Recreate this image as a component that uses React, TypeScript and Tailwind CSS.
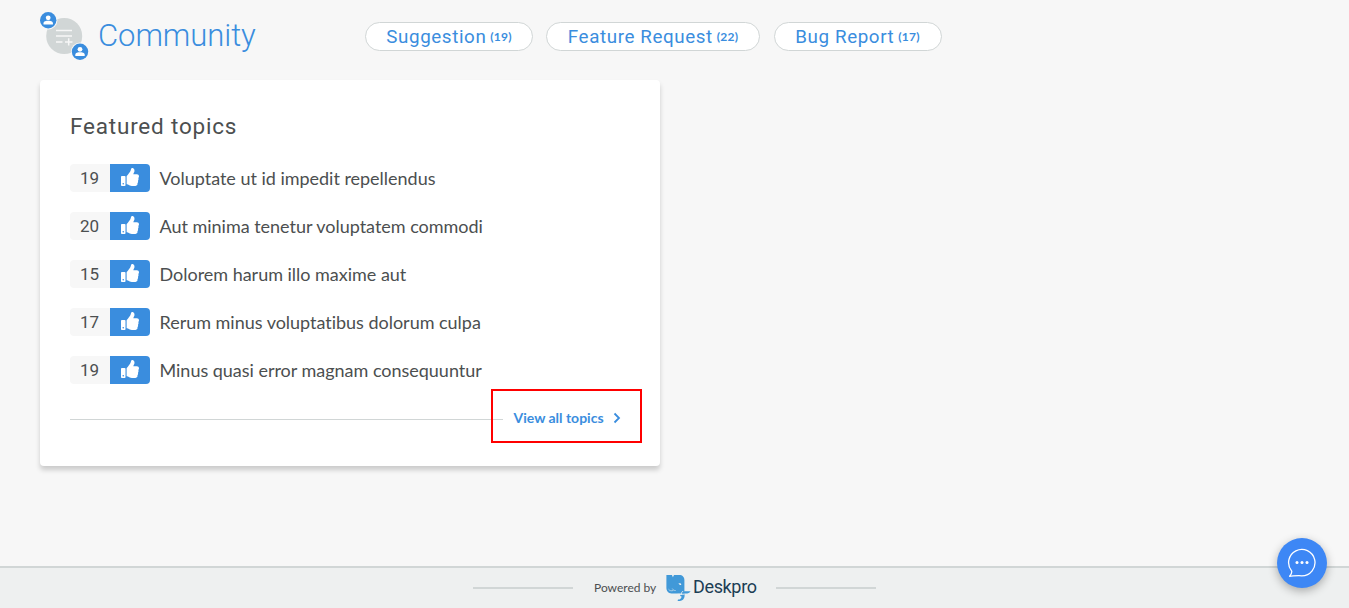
import { FaThumbsUp } from 'react-icons/fa';

const categories = [
  { name: 'Suggestion', count: 19, width: 'w-[168px]' },
  { name: 'Feature Request', count: 22, width: 'w-[214px]' },
  { name: 'Bug Report', count: 17, width: 'w-[168px]' },
];

const topics = [
  { votes: 19, title: 'Voluptate ut id impedit repellendus' },
  { votes: 20, title: 'Aut minima tenetur voluptatem commodi' },
  { votes: 15, title: 'Dolorem harum illo maxime aut' },
  { votes: 17, title: 'Rerum minus voluptatibus dolorum culpa' },
  { votes: 19, title: 'Minus quasi error magnam consequuntur' },
];

function Person({ x, y }: { x: number; y: number }) {
  return (
    <g transform={`translate(${x} ${y})`}>
      <circle r="9.2" fill="#f7f7f7" />
      <circle r="8.2" fill="#3a8dde" />
      <circle cy="-2.4" r="2.4" fill="#fff" />
      <path d="M-4.700 4.200V3C-4.700 1.200-2 .6 0 .6S4.700 1.200 4.700 3v1.200Z" fill="#fff" />
    </g>
  );
}

function CommunityIcon() {
  return (
    <svg width="50" height="50" viewBox="0 0 50 50" className="shrink-0">
      <circle cx="24.200" cy="25" r="18" fill="#d1d6d6" />
      <path d="M16 19.600h16M16 25h16M16 30.900h6.500M25 30.900h7.500M28.700 27.300v7.200" stroke="#f7f7f7" strokeWidth="1.500" fill="none" />
      <Person x={8.2} y={9.2} />
      <Person x={40} y={40.7} />
    </svg>
  );
}

function DeskproMark() {
  return (
    <svg width="25" height="28" viewBox="0 0 25 28" className="shrink-0">
      <path
        d="M.4 1h5.500l1 2.200L8 1h5.200C16.500 1 18.400 3.100 18.400 6v11.600h-2.300l-.6 1.800H5.500C2.300 19.300.4 17 .4 14Z"
        fill="#4199d8"
      />
      <path d="M2.500 15.200c1.300 1.700 3 1.900 4.600 1.300M6.300 14.600c.7 1.500 1.800 2 3.400 1.900" stroke="#eef0f0" strokeWidth=".6" fill="none" />
      <path d="M12.400 9.300h2.200l.8 1.700h-1.600Z" fill="#eef0f0" />
      <path d="M15.600 17.300h9c-.8 1.900-2.800 2.400-6 2.300v1.800c0 3.700-2.400 5.800-7 5.600l.4-1.400c2.200-.1 3.400-1.300 3.600-3.200l-1.500-.3Z" fill="#4199d8" />
      <path d="M11.500 20.300h4l.2-1.800 1-1.300M15 20.400l3.700-.3" stroke="#eef0f0" strokeWidth=".9" fill="none" />
    </svg>
  );
}

export default function App() {
  return (
    <div className="relative flex h-[608px] w-full flex-col overflow-hidden bg-[#f7f7f7] font-['Lato',sans-serif] text-[#4c4f50]">
      <header className="flex h-20 items-start pl-10">
        <div className="flex w-[325px] items-start pt-[11px]">
          <CommunityIcon />
          <h1 className="ml-[8px] mt-[3px] font-['Roboto',sans-serif] text-[31px] leading-[44px] font-light tracking-[-0.050px] text-[#3a8dde]">
            Community
          </h1>
        </div>
        <nav className="flex gap-[13.500px] pt-[22px] text-[#3a8dde]">
          {categories.map((c) => (
            <a
              key={c.name}
              className={`flex h-[29px] items-center justify-center rounded-full border border-[#d1d6d6] bg-white pt-px font-['Roboto',sans-serif] text-[18.800px] tracking-[0.600px] whitespace-nowrap first:-mr-[0.5px] ${c.width}`}
            >
              {c.name}
              <span className="ml-[4px] font-['Lato',sans-serif] text-[12px] font-bold tracking-[0.200px]">({c.count})</span>
            </a>
          ))}
        </nav>
      </header>

      <main className="flex-1 pl-10">
        <section className="h-[386px] w-[620px] rounded-[4px] bg-white px-[30px] pt-[31px] shadow-[0_4px_5px_rgba(0,0,0,0.18)]">
          <h2 className="font-['Roboto',sans-serif] text-[22.500px] leading-[30px] tracking-[0.800px]">Featured topics</h2>
          <ul className="mt-[23px] flex flex-col gap-5">
            {topics.map((t) => (
              <li key={t.title} className="flex h-7 items-center">
                <span className="flex h-7 w-10 items-center justify-center rounded-l-[4px] bg-[#f7f7f7] pt-px pr-px font-['Roboto',sans-serif] text-[17px]">
                  {t.votes}
                </span>
                <span className="flex h-7 w-10 items-center justify-center rounded-r-[4px] bg-[#3a8dde] pb-[2px] text-white">
                  <FaThumbsUp size={18} />
                </span>
                <span className="ml-[9.500px] text-[18px] leading-[26px] tracking-[-0.02px] whitespace-nowrap [font-variant-ligatures:none]">{t.title}</span>
              </li>
            ))}
          </ul>
          <div className="mt-[5px] flex h-[54px] items-center">
            <div className="mt-[7px] h-px w-[421px] shrink-0 bg-[#d1d6d6]" />
            <div className="flex h-[54px] w-[151px] shrink-0 items-center border-2 border-[#ff0000]">
              <span className="h-px w-[10px] translate-y-[3px] bg-[#d1d6d6]" />
              <a className="ml-[10.500px] pt-[3px] text-[14px] leading-[20px] font-bold whitespace-nowrap text-[#3a8dde]">View all topics</a>
              <svg width="8" height="12" viewBox="0 0 8 12" className="mt-[3px] ml-[9px]">
                <path d="M1.500 1.500 6 6l-4.500 4.500" fill="none" stroke="#3a8dde" strokeWidth="1.800" />
              </svg>
            </div>
          </div>
        </section>
      </main>

      <footer className="flex h-[42px] items-center justify-center border-t-2 border-[#d1d6d6] bg-[#eef0f0]">
        <span className="h-[2px] w-[100px] bg-[#d1d6d6]" />
        <span className="ml-[21px] w-[62px] text-[12px] whitespace-nowrap">Powered by</span>
        <span className="ml-[10px] flex w-[91px] items-center">
          <DeskproMark />
          <span className="ml-[2px] -translate-y-[2px] font-['Roboto',sans-serif] text-[18px] tracking-[-0.350px] text-[#1c3e55]">Deskpro</span>
        </span>
        <span className="ml-[19px] h-[2px] w-[100px] bg-[#d1d6d6]" />
      </footer>

      <button
        aria-label="Open chat"
        className="absolute top-[538px] left-[1277px] flex size-[50px] items-center justify-center rounded-full bg-[#3d87f5] shadow-[0_3px_10px_rgba(0,0,0,0.3)]"
      >
        <svg width="30" height="30" viewBox="0 0 30 30">
          <path
            d="M2.600 28.300c1.700-1.800 2.400-3.300 2.100-5.200A13.200 13.200 0 1 1 14.800 27.800c-4.300-.6-8.300.3-12.200.5Z"
            fill="none"
            stroke="#fff"
            strokeWidth="1.300"
            strokeLinejoin="round"
          />
          <circle cx="10" cy="14.500" r="1.500" fill="#fff" />
          <circle cx="15" cy="14.500" r="1.500" fill="#fff" />
          <circle cx="20" cy="14.500" r="1.500" fill="#fff" />
        </svg>
      </button>
    </div>
  );
}
